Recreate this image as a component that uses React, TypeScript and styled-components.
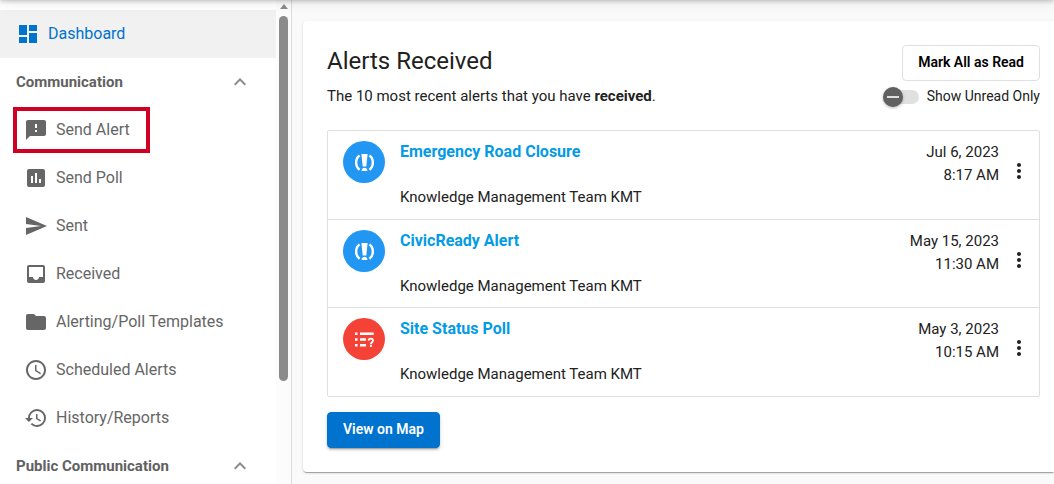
import React from 'react';
import styled, { createGlobalStyle, css } from 'styled-components';
import type { IconType } from 'react-icons';
import {
  MdAssessment,
  MdDashboard,
  MdExpandLess,
  MdFeedback,
  MdFolder,
  MdHistory,
  MdInbox,
  MdMoreVert,
  MdSchedule,
  MdSend,
} from 'react-icons/md';

const GlobalStyle = createGlobalStyle`
  *, *::before, *::after { box-sizing: border-box; }
  body {
    margin: 0;
    background: #fafafa;
    color: #212121;
    font-family: Roboto, "Liberation Sans", sans-serif;
    font-size: 15px;
    line-height: 23px;
  }
  h1, h2, p, ul { margin: 0; padding: 0; }
  ul { list-style: none; }
  button { font-family: inherit; cursor: pointer; }
  a { text-decoration: none; }
`;

const Shell = styled.div`
  position: relative;
  display: flex;
  height: 100vh;
  overflow: hidden;
`;

/* Shadow that the app bar casts over the page below it */
const AppBarShadow = styled.div`
  position: absolute;
  z-index: 2;
  bottom: 100%;
  left: 0;
  right: 0;
  height: 64px;
  pointer-events: none;
  box-shadow: 0 1px 4px 0 rgba(0, 0, 0, 0.22), 0 2px 12px 0 rgba(0, 0, 0, 0.1);
`;

const Sidebar = styled.aside`
  display: flex;
  flex: none;
  width: 292px;
  background: #fff;
  border-right: 1px solid #dcdcdc;
`;

const Nav = styled.nav`
  display: flex;
  flex: 1;
  flex-direction: column;
  padding-top: 10px;
  overflow: hidden;
`;

const DashboardLink = styled.a`
  display: flex;
  flex: none;
  align-items: center;
  gap: 8px;
  height: 48px;
  padding: 0 16px;
  background: #f1f1f1;
  color: #0073cf;
  font-size: 16px;
`;

const NavLabel = styled.span`
  padding-bottom: 2px;
`;

const SectionToggle = styled.button`
  display: flex;
  flex: none;
  align-items: center;
  justify-content: space-between;
  height: 48px;
  padding: 0 24px 0 16px;
  border: 0;
  background: none;
  color: #616161;
  font-size: 15px;
  font-weight: 700;
  text-align: left;

  svg { color: #8a8a8a; }
`;

const NavList = styled.ul`
  display: flex;
  flex: none;
  flex-direction: column;
`;

const NavItem = styled.li`
  display: flex;
  height: 48px;
`;

const NavLink = styled.a<{ $highlighted?: boolean }>`
  display: flex;
  flex: 1;
  align-items: center;
  gap: 8px;
  padding: 0 24px;
  color: #666;
  font-size: 16px;

  ${({ $highlighted }) =>
    $highlighted &&
    css`
      flex: none;
      width: 137px;
      margin: 1px 13px;
      padding: 0 7px;
      border: 4px solid #cf0022;
      white-space: nowrap;
    `}
`;

const ScrollTrack = styled.div`
  display: flex;
  flex: none;
  flex-direction: column;
  align-items: center;
  gap: 7px;
  width: 15px;
  padding-top: 4px;
  background: #fcfcfc;
`;

const ScrollArrow = styled.div`
  border: 4px solid transparent;
  border-top: 0;
  border-bottom: 5px solid #8b8b8b;
`;

const ScrollThumb = styled.div`
  width: 9px;
  height: 76%;
  border-radius: 5px;
  background: #8b8b8b;
`;

const Main = styled.main`
  flex: 1;
  min-width: 0;
  padding: 21px 0 12px 11px;
`;

const Card = styled.section`
  padding: 24px 14px 24px 24px;
  border-radius: 4px 0 0 4px;
  background: #fff;
  box-shadow: 0 2px 1px -1px rgba(0, 0, 0, 0.2), 0 1px 1px 0 rgba(0, 0, 0, 0.14),
    0 1px 3px 0 rgba(0, 0, 0, 0.12);
`;

const CardHeader = styled.header`
  display: flex;
  justify-content: space-between;
  margin-bottom: 22px;
`;

const Title = styled.h1`
  margin-bottom: 8px;
  font-size: 24px;
  font-weight: 400;
  line-height: 32px;
`;

const HeaderActions = styled.div`
  display: flex;
  flex-direction: column;
  align-items: flex-end;
  gap: 4px;
`;

const Button = styled.button<{ $primary?: boolean }>`
  height: 36px;
  padding: 0 15px 2px;
  border: 1px solid #e0e0e0;
  border-radius: 4px;
  background: #fff;
  color: #000;
  font-size: 14px;
  font-weight: 600;

  ${({ $primary }) =>
    $primary &&
    css`
      border-color: #0073cf;
      background: #0073cf;
      color: #fff;
      box-shadow: 0 3px 1px -2px rgba(0, 0, 0, 0.2), 0 2px 2px 0 rgba(0, 0, 0, 0.14),
        0 1px 5px 0 rgba(0, 0, 0, 0.12);
    `}
`;

const SwitchLabel = styled.label`
  display: flex;
  align-items: center;
  gap: 8px;
  font-size: 14px;
`;

const Switch = styled.input`
  position: relative;
  appearance: none;
  width: 36px;
  height: 14px;
  margin: 0;
  border-radius: 7px;
  background: #e0e0e0;
  cursor: pointer;

  &::before {
    content: '';
    position: absolute;
    top: -3px;
    left: 0;
    width: 20px;
    height: 20px;
    border-radius: 50%;
    background: #616161;
    box-shadow: 0 1px 3px rgba(0, 0, 0, 0.3);
  }

  &::after {
    content: '';
    position: absolute;
    top: 6px;
    left: 4px;
    width: 12px;
    height: 2px;
    background: #e0e0e0;
  }

  &:checked::before { left: 16px; }
  &:checked::after { left: 20px; }
`;

const AlertList = styled.ul`
  display: flex;
  flex-direction: column;
  margin-bottom: 15px;
  border: 1px solid #e0e0e0;
  border-radius: 2px;
`;

const AlertRow = styled.li`
  display: flex;
  align-items: flex-start;
  min-height: 88px;
  padding: 9px 8px 9px 15px;

  & + & { border-top: 1px solid #e0e0e0; }
  &:last-child { padding-bottom: 10px; }
`;

const Badge = styled.svg`
  flex: none;
  width: 42px;
  height: 42px;
  margin: 1px 15px 0 0;
`;

const AlertBody = styled.div`
  display: flex;
  flex: 1;
  flex-direction: column;
  align-items: flex-start;
  gap: 23px;
`;

const AlertTitle = styled.a`
  color: #039be5;
  font-size: 16px;
  font-weight: 700;
`;

const AlertTime = styled.time`
  display: flex;
  flex-direction: column;
  padding-top: 1px;
  text-align: right;
`;

const MenuButton = styled.button`
  display: flex;
  margin: 19px 0 0 8px;
  padding: 0;
  border: 0;
  background: none;
  color: #212121;
`;

type Kind = 'alert' | 'poll';

const KindBadge = ({ kind }: { kind: Kind }) =>
  kind === 'alert' ? (
    <Badge viewBox="0 0 42 42" role="img" aria-label="Alert">
      <circle cx="21" cy="21" r="21" fill="#2196f3" />
      <path
        d="M16.6 14.4C12 17.5 12 25.5 16.6 28.8M26.4 14.4C31 17.5 31 25.5 26.4 28.8"
        fill="none"
        stroke="#fff"
        strokeWidth="2.4"
      />
      <path d="M18.4 13h6.2l-1.3 12.6h-3.6zM18.6 30c0-4.4 5.8-4.4 5.8 0z" fill="#fff" />
    </Badge>
  ) : (
    <Badge viewBox="0 0 42 42" role="img" aria-label="Poll">
      <circle cx="21" cy="21" r="21" fill="#f44336" />
      <path
        d="M12 14.5h2.5V17H12zM12 20.3h2.5v2.5H12zM12 26.1h2.5v2.5H12zM17 14.5h13.7V17H17zM17 20.3h6v2.5h-6zM17 26.1h6v2.5h-6z"
        fill="#fff"
      />
      <path
        d="M25.6 22.6c.2-2.8 4.4-2.6 4.4 0 0 1.6-2.1 1.8-2.1 3.6"
        fill="none"
        stroke="#fff"
        strokeWidth="1.8"
      />
      <path d="M26.9 26.9h2v2h-2z" fill="#fff" />
    </Badge>
  );

const communicationLinks: { label: string; icon: IconType; highlighted?: boolean }[] = [
  { label: 'Send Alert', icon: MdFeedback, highlighted: true },
  { label: 'Send Poll', icon: MdAssessment },
  { label: 'Sent', icon: MdSend },
  { label: 'Received', icon: MdInbox },
  { label: 'Alerting/Poll Templates', icon: MdFolder },
  { label: 'Scheduled Alerts', icon: MdSchedule },
  { label: 'History/Reports', icon: MdHistory },
];

const alerts: { kind: Kind; title: string; date: string; time: string }[] = [
  { kind: 'alert', title: 'Emergency Road Closure', date: 'Jul 6, 2023', time: '8:17 AM' },
  { kind: 'alert', title: 'CivicReady Alert', date: 'May 15, 2023', time: '11:30 AM' },
  { kind: 'poll', title: 'Site Status Poll', date: 'May 3, 2023', time: '10:15 AM' },
];

export default function App() {
  return (
    <>
      <GlobalStyle />
      <Shell>
        <AppBarShadow />
        <Sidebar>
          <Nav aria-label="Main">
            <DashboardLink href="#dashboard" aria-current="page">
              <MdDashboard size={24} />
              <NavLabel>Dashboard</NavLabel>
            </DashboardLink>
            <SectionToggle type="button" aria-expanded="true">
              Communication
              <MdExpandLess size={24} />
            </SectionToggle>
            <NavList>
              {communicationLinks.map(({ label, icon: Icon, highlighted }) => (
                <NavItem key={label}>
                  <NavLink href="#" $highlighted={highlighted}>
                    <Icon size={24} />
                    <NavLabel>{label}</NavLabel>
                  </NavLink>
                </NavItem>
              ))}
            </NavList>
            <SectionToggle type="button" aria-expanded="true">
              Public Communication
              <MdExpandLess size={24} />
            </SectionToggle>
          </Nav>
          <ScrollTrack aria-hidden="true">
            <ScrollArrow />
            <ScrollThumb />
          </ScrollTrack>
        </Sidebar>
        <Main>
          <Card>
            <CardHeader>
              <div>
                <Title>Alerts Received</Title>
                <p>
                  The 10 most recent alerts that you have <strong>received</strong>.
                </p>
              </div>
              <HeaderActions>
                <Button type="button">Mark All as Read</Button>
                <SwitchLabel>
                  <Switch type="checkbox" role="switch" />
                  Show Unread Only
                </SwitchLabel>
              </HeaderActions>
            </CardHeader>
            <AlertList>
              {alerts.map(({ kind, title, date, time }) => (
                <AlertRow key={title}>
                  <KindBadge kind={kind} />
                  <AlertBody>
                    <AlertTitle href="#">{title}</AlertTitle>
                    <p>Knowledge Management Team KMT</p>
                  </AlertBody>
                  <AlertTime>
                    <span>{date}</span>
                    <span>{time}</span>
                  </AlertTime>
                  <MenuButton type="button" aria-label={`Options for ${title}`}>
                    <MdMoreVert size={24} />
                  </MenuButton>
                </AlertRow>
              ))}
            </AlertList>
            <Button type="button" $primary>
              View on Map
            </Button>
          </Card>
        </Main>
      </Shell>
    </>
  );
}
